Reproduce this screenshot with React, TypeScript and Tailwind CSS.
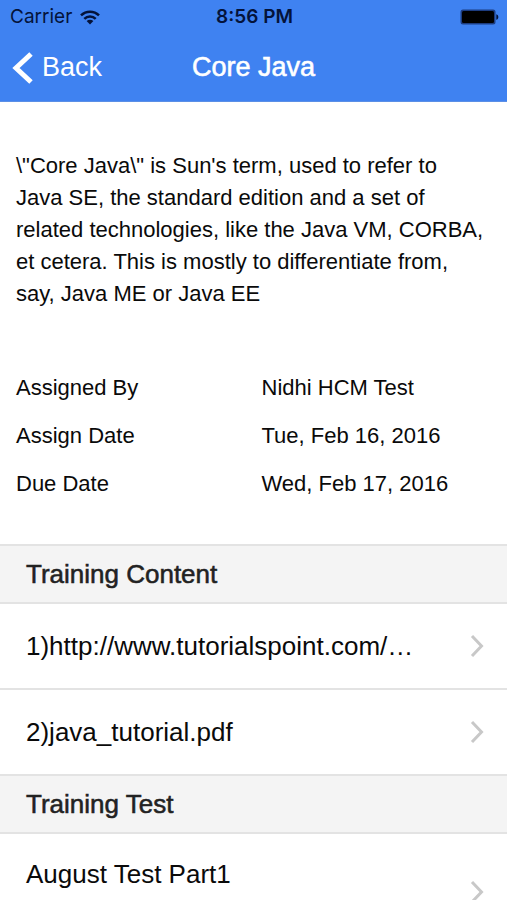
import { ReactNode } from "react";

const details = [
  { label: "Assigned By", value: "Nidhi HCM Test" },
  { label: "Assign Date", value: "Tue, Feb 16, 2016" },
  { label: "Due Date", value: "Wed, Feb 17, 2016" },
];

const contents = [
  { href: "#tutorialspoint", title: "1)http://www.tutorialspoint.com/…" },
  { href: "#java-tutorial", title: "2)java_tutorial.pdf" },
];

function WifiIcon() {
  return (
    <svg width="20" height="15" viewBox="0 0 20 15" fill="none" stroke="#04133a" strokeWidth="2.5" aria-hidden="true">
      <path d="M1 5.4C6 .4 14 .4 19 5.4" />
      <path d="M4.300 8.800C7.500 5.600 12.500 5.600 15.700 8.800" />
      <path d="M10 14.500 6.600 11C8.600 9.300 11.400 9.300 13.400 11Z" fill="#04133a" stroke="none" />
    </svg>
  );
}

function BatteryIcon() {
  return (
    <svg width="39" height="16" viewBox="0 0 39 16" aria-hidden="true">
      <rect x=".5" y=".5" width="35" height="15" rx="2.500" fill="#1c3c80" />
      <rect x="2" y="2" width="32" height="12" rx="1.500" fill="#000" />
      <path d="M36.300 5.200c2.700.8 2.700 4.800 0 5.600z" fill="#04133a" />
    </svg>
  );
}

function SectionTitle({ children }: { children: ReactNode }) {
  return (
    <h2 className="border-y-2 border-[#e3e3e3] bg-[#f4f4f4] px-[26px] py-3 text-[26px] leading-8 text-[#222] [-webkit-text-stroke:thin]">
      {children}
    </h2>
  );
}

function Chevron() {
  return (
    <svg className="shrink-0" width="14" height="24" viewBox="0 0 14 24" fill="none" stroke="#c8c8c8" strokeWidth="3" aria-hidden="true">
      <path d="M2 2 11.500 12 2 22" />
    </svg>
  );
}

export default function App() {
  return (
    <div className="flex h-screen flex-col bg-white font-['Liberation_Sans',Arial,sans-serif] text-[#0a0a0a]">
      <header className="shrink-0 border-b border-[#5b8fe6] bg-[#3f82f1]">
        {/* Status bar */}
        <div className="grid h-[34px] grid-cols-3 items-center pl-[10px] pr-2 font-['Inter',sans-serif] text-[19px] text-[#04133a]">
          <div className="flex items-center gap-2">
            <span>Carrier</span>
            <WifiIcon />
          </div>
          <span className="text-center font-semibold">8:56 PM</span>
          <div className="flex justify-end">
            <BatteryIcon />
          </div>
        </div>

        {/* Navigation */}
        <div className="grid h-[67px] grid-cols-3 items-center px-3 text-[27px] text-white">
          <button type="button" className="flex items-center gap-2">
            <svg width="22" height="32" viewBox="0 0 22 32" fill="none" stroke="currentColor" strokeWidth="5" aria-hidden="true">
              <path d="M19 2 4 16 19 30" />
            </svg>
            Back
          </button>
          <h1 className="text-center [-webkit-text-stroke:thin]">Core Java</h1>
        </div>
      </header>

      <main className="min-h-0 flex-1 overflow-y-auto [scrollbar-width:none]">
        <div className="pb-9 pl-4 pt-12 text-[22px] leading-8">
          <p className="pr-5">
            \"Core Java\" is Sun's term, used to refer to Java SE, the standard edition and a set of related
            technologies, like the Java VM, CORBA, et cetera. This is mostly to differentiate from, say, Java ME or
            Java EE
          </p>
          <dl className="mt-[54px] pr-4">
            {details.map((item) => (
              <div key={item.label} className="grid grid-cols-2 gap-4 py-2">
                <dt>{item.label}</dt>
                <dd>{item.value}</dd>
              </div>
            ))}
          </dl>
        </div>

        <section>
          <SectionTitle>Training Content</SectionTitle>
          <ul className="divide-y-2 divide-[#e3e3e3] text-[26px]">
            {contents.map((item) => (
              <li key={item.href}>
                <a href={item.href} className="flex h-[84px] items-center justify-between pl-[26px] pr-[23px]">
                  <span>{item.title}</span>
                  <Chevron />
                </a>
              </li>
            ))}
          </ul>
        </section>

        <section>
          <SectionTitle>Training Test</SectionTitle>
          <a href="#august-test" className="flex h-[116px] items-center justify-between pl-[26px] pr-[23px] text-[26px] leading-8">
            <span className="self-start pt-6">August Test Part1</span>
            <Chevron />
          </a>
        </section>
      </main>
    </div>
  );
}
